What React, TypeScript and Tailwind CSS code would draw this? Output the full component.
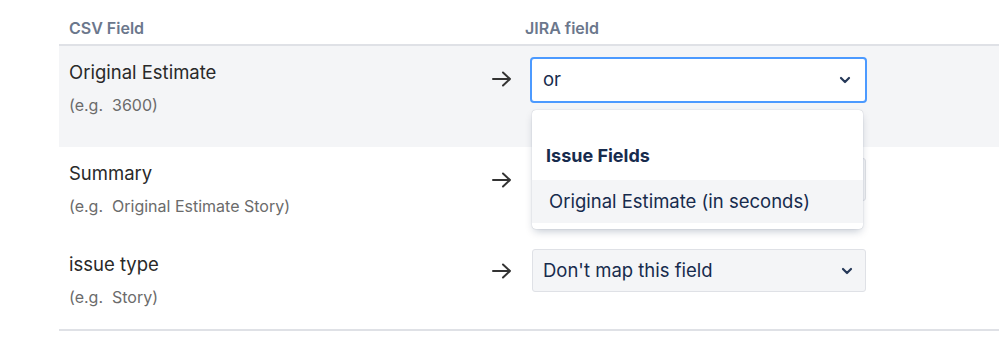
import React from 'react';

type Row = {
    label: string;
    hint: string;
};

const rows: Row[] = [
    { label: 'Original Estimate', hint: '(e.g.  3600)' },
    { label: 'Summary', hint: '(e.g.  Original Estimate Story)' },
    { label: 'issue type', hint: '(e.g.  Story)' },
];

const Arrow = () => (
    <svg width="20" height="16" viewBox="0 0 20 16" fill="none" className="block">
        <path d="M1 8h17M11 1.5 18 8l-7 6.5" stroke="#333" strokeWidth="2" strokeLinecap="round" strokeLinejoin="round" />
    </svg>
);

const Chevron = () => (
    <svg width="12" height="8" viewBox="0 0 12 8" fill="none" className="block">
        <path d="M2 2l4 4 4-4" stroke="#253858" strokeWidth="2.2" strokeLinecap="round" strokeLinejoin="round" />
    </svg>
);

export default function App() {
    return (
        <div
            className="w-[999px] h-[345px] bg-white overflow-hidden relative"
            style={{ fontFamily: 'Inter, "Noto Sans", sans-serif' }}
        >
            <div className="ml-[59px] w-[980px]">
                {/* header */}
                <div className="flex items-end h-[46px] pb-[4px] border-b-2 border-[#dfe1e6] pl-[10px] text-[16px] font-semibold text-[#6b778c]">
                    <div className="w-[456px]">CSV Field</div>
                    <div>JIRA field</div>
                </div>

                {rows.map((row, i) => (
                    <div
                        key={row.label}
                        className={
                            i === 0
                                ? 'flex h-[101px] bg-[#f4f5f7] pl-[10px]'
                                : 'flex h-[91px] pl-[10px]'
                        }
                    >
                        <div className="w-[423px] pt-[13px]">
                            <div className="text-[18.5px] leading-[26px] text-[#292929] whitespace-pre">{row.label}</div>
                            <div className="mt-[8px] text-[16px] leading-6 text-[#6b6b6b] whitespace-pre">{row.hint}</div>
                        </div>
                        <div className="w-[40px] h-[43px] mt-[11px] flex items-center">
                            <Arrow />
                        </div>
                        {i === 0 ? (
                            <div className="mt-[11px] ml-[-2px] w-[337px] h-[46px] border-2 border-[#4c9aff] rounded-[4px] bg-white flex items-center justify-between pl-[11px] pr-[14px] text-[18.5px] text-[#172b4d]">
                                <span>or</span>
                                <Chevron />
                            </div>
                        ) : (
                            <div className="mt-[11px] w-[334px] h-[43px] border border-[#dfe1e6] rounded-[3px] bg-[#f4f5f7] flex items-center justify-between pl-[10px] pr-[12px] text-[18.5px] text-[#172b4d]">
                                <span>{i === 2 ? "Don't map this field" : 'Summary'}</span>
                                <Chevron />
                            </div>
                        )}
                    </div>
                ))}

                <div className="h-[2px] bg-[#dfe1e6]" />
            </div>

            {/* open menu */}
            <div className="absolute left-[532px] top-[110px] w-[331px] h-[119px] bg-white rounded-[4px] shadow-[0_4px_8px_-2px_rgba(9,30,66,0.25),0_0_1px_rgba(9,30,66,0.31)] pt-[34px] pb-[6px]">
                <div className="px-[14px] h-[36px] text-[18px] font-bold text-[#172b4d] leading-6">Issue Fields</div>
                <div className="h-[43px] bg-[#f4f5f7] flex items-center pl-[17px] text-[18.5px] text-[#172b4d]">
                    Original Estimate (in seconds)
                </div>
            </div>
        </div>
    );
}
